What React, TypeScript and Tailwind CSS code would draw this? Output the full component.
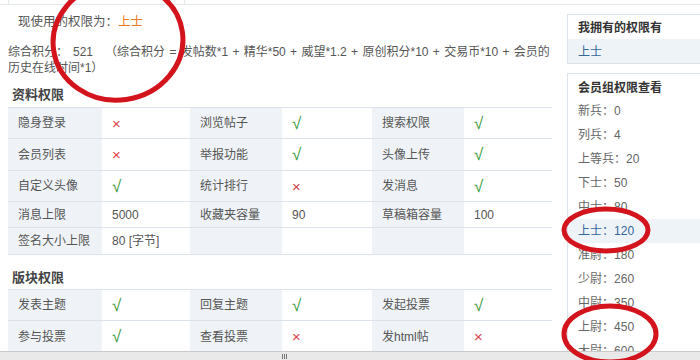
import React from "react";

type Cell = [string, string];

const V = "__yes";
const X = "__no";

const basicRows: { h: string; cells: Cell[] }[] = [
  { h: "h-[31px]", cells: [["隐身登录", X], ["浏览帖子", V], ["搜索权限", V]] },
  { h: "h-[32px]", cells: [["会员列表", X], ["举报功能", V], ["头像上传", V]] },
  { h: "h-[31px]", cells: [["自定义头像", V], ["统计排行", X], ["发消息", V]] },
  { h: "h-[26px]", cells: [["消息上限", "5000"], ["收藏夹容量", "90"], ["草稿箱容量", "100"]] },
  { h: "h-[27px]", cells: [["签名大小上限", "80 [字节]"], ["", ""], ["", ""]] },
];

const forumRows: { h: string; cells: Cell[] }[] = [
  { h: "h-[31px]", cells: [["发表主题", V], ["回复主题", V], ["发起投票", V]] },
  { h: "h-[32px]", cells: [["参与投票", V], ["查看投票", X], ["发html帖", X]] },
];

const groups = [
  ["新兵", "0"],
  ["列兵", "4"],
  ["上等兵", "20"],
  ["下士", "50"],
  ["中士", "80"],
  ["上士", "120"],
  ["准尉", "180"],
  ["少尉", "260"],
  ["中尉", "350"],
  ["上尉", "450"],
  ["大尉", "600"],
];

const labelW = ["w-[94px]", "w-[92px]", "w-[92px]"];
const valueW = ["w-[88px]", "w-[90px]", "w-[88px]"];

function Value({ v }: { v: string }) {
  if (v === V) return <span className="text-[17px] leading-none text-[#3c9a3c]">√</span>;
  if (v === X) return <span className="text-[15px] leading-none text-[#d9434a]">×</span>;
  return <span>{v}</span>;
}

function PermTable({ rows }: { rows: { h: string; cells: Cell[] }[] }) {
  return (
    <div className="w-[544px] border-t border-[#dbe2ea]">
      {rows.map((row, i) => (
        <div key={i} className={`flex border-b border-[#dbe2ea] ${row.h}`}>
          {row.cells.map(([label, value], j) => (
            <React.Fragment key={j}>
              <div className={`${labelW[j]} flex items-center bg-[#eff3f7] pl-[10px] text-[#555]`}>
                {label}
              </div>
              <div className={`${valueW[j]} flex items-center pl-[10px] text-[#555]`}>
                <Value v={value} />
              </div>
            </React.Fragment>
          ))}
        </div>
      ))}
    </div>
  );
}

export default function App() {
  return (
    <div
      className="relative h-[360px] w-[700px] overflow-hidden bg-white text-[12px] leading-[16px] text-[#555]"
      style={{ fontFamily: '"Liberation Sans", "Noto Sans CJK SC", sans-serif' }}
    >
      {/* top tab strip */}
      <div className="h-[5px] border-b border-[#e3e8ee]">
        <div className="ml-[8px] h-full w-[177px] border-x border-[#e3e8ee]" />
      </div>

      <div className="flex">
        {/* main column */}
        <div className="w-[559px] shrink-0 pl-[8px]">
          <div className="mt-[9px] pl-[10px] text-[12.5px]">
            现使用的权限为：<span className="text-[#ee7a22]">上士</span>
          </div>
          <div className="mt-[14px] text-[12px]">
            <div className="whitespace-nowrap">
              综合积分：<span className="ml-[5px]">521</span>
              <span className="ml-[12px] [word-spacing:1px]">
                （综合积分 = 发帖数*1 + 精华*50 + 威望*1.2 + 原创积分*10 + 交易币*10 + 会员的
              </span>
            </div>
            <div>历史在线时间*1）</div>
          </div>

          <div className="mt-[11px] mb-[4px] pl-[4px] text-[13px] font-bold text-[#444]">资料权限</div>
          <PermTable rows={basicRows} />

          <div className="mt-[15px] mb-[3px] pl-[4px] text-[13px] font-bold text-[#444]">版块权限</div>
          <PermTable rows={forumRows} />
        </div>

        {/* sidebar */}
        <div className="mt-[9px] w-[150px] shrink-0 pl-[8px]">
          <div className="border border-[#dde3ea]">
            <div className="h-[24px] pl-[10px] pt-[5px] text-[12px] font-bold text-[#333]">我拥有的权限有</div>
            <div className="h-[24px] bg-[#eef3f8] pl-[10px] pt-[5px] text-[#336699]">上士</div>
          </div>
          <div className="mt-[9px] border border-[#dde3ea]">
            <div className="h-[25px] pl-[10px] pt-[6px] text-[12px] font-bold text-[#333]">会员组权限查看</div>
            {groups.map(([name, pts]) => (
              <div
                key={name}
                className={`h-[24px] pl-[10px] pt-[4px] ${
                  name === "上士" ? "bg-[#eef3f8] text-[#336699]" : "text-[#666]"
                }`}
              >
                {name}：{pts}
              </div>
            ))}
          </div>
        </div>
      </div>

      {/* horizontal scrollbar */}
      <div className="absolute bottom-0 left-0 flex h-[9px] w-full items-center justify-center border-t border-[#c9c9c9] bg-[#e9e9e9]">
        <div className="ml-[-132px] flex gap-[1px]">
          <div className="h-[5px] w-[1px] bg-[#777]" />
          <div className="h-[5px] w-[1px] bg-[#777]" />
          <div className="h-[5px] w-[1px] bg-[#777]" />
        </div>
      </div>

      {/* red annotation circles */}
      <svg className="pointer-events-none absolute left-0 top-0" width="700" height="360" viewBox="0 0 700 360">
        <g fill="none" stroke="#d3141d" strokeWidth="5">
          <ellipse cx="118" cy="41" rx="65" ry="59" transform="rotate(-8 118 41)" />
          <ellipse cx="606" cy="230" rx="42" ry="21" />
          <ellipse cx="610" cy="334" rx="46" ry="28" />
        </g>
      </svg>
    </div>
  );
}
